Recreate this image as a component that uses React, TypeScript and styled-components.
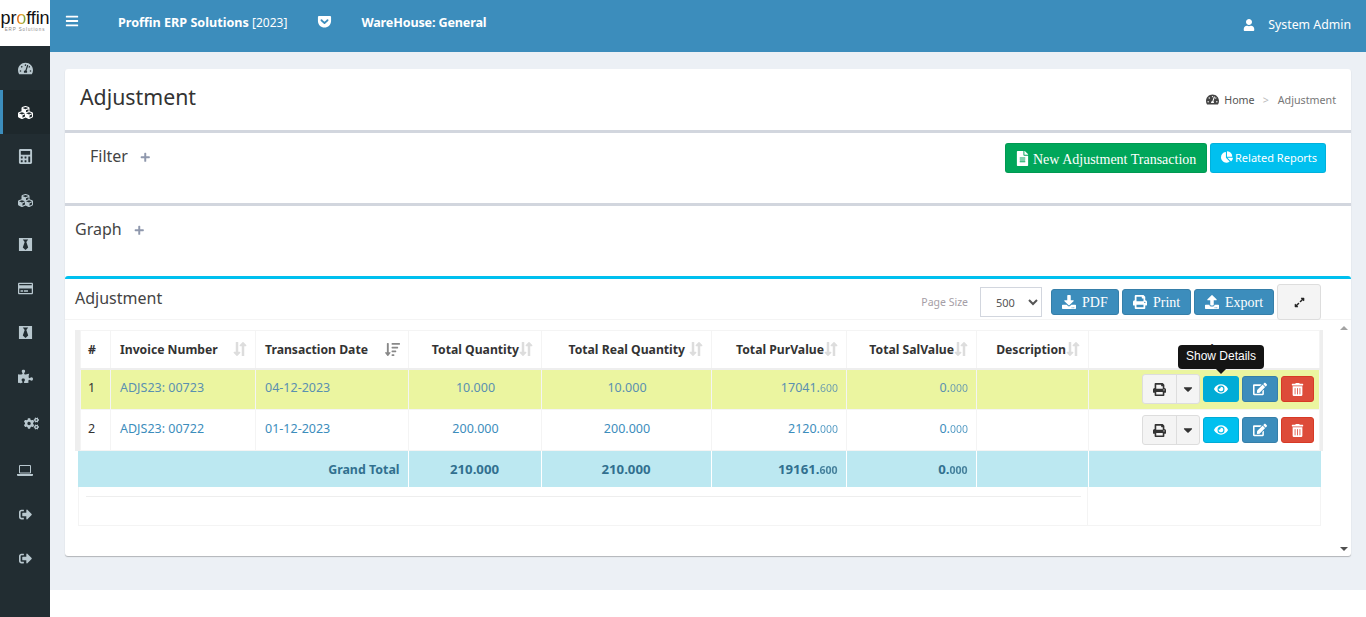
import React from 'react';
import styled, { createGlobalStyle } from 'styled-components';
import {
  FaBars, FaBlackTie, FaChartPie, FaCogs, FaCubes, FaDownload, FaEdit, FaEye, FaFileAlt, FaGetPocket,
  FaLongArrowAltDown, FaLongArrowAltUp, FaPlus, FaPrint, FaPuzzlePiece, FaRegCreditCard,
  FaSignOutAlt, FaSortAmountDown, FaTachometerAlt, FaTrashAlt, FaUpload, FaUser, FaCalculator,
  FaCaretDown, FaExpandAlt,
} from 'react-icons/fa';

const FONT = `'Noto Sans', 'Liberation Sans', sans-serif`;

const GlobalStyle = createGlobalStyle`
  html, body { margin: 0; padding: 0; background: #fff; }
  body { font-family: ${FONT}; font-size: 13px; color: #333; overflow: hidden; }
  * { box-sizing: border-box; }
`;

const Shell = styled.div`
  display: flex;
  width: 1366px;
  height: 617px;
  overflow: hidden;
`;

const Sidebar = styled.aside`
  width: 50px;
  flex: none;
  background: #222d32;
  display: flex;
  flex-direction: column;
`;

const Logo = styled.div`
  height: 46px;
  background: #fff;
  display: flex;
  flex-direction: column;
  align-items: center;
  overflow: hidden;
  padding-top: 9px;
  color: #111;
  font: 18px/18px 'Liberation Sans', sans-serif;
  letter-spacing: -0.1px;
`;

const LogoO = styled.span`
  background: linear-gradient(100deg, #d8392b 0%, #e8a21f 50%, #3aa655 100%);
  -webkit-background-clip: text;
  background-clip: text;
  color: transparent;
`;

const LogoSub = styled.div`
  font-size: 4.5px;
  line-height: 6px;
  letter-spacing: 0.9px;
  color: #888;
  white-space: nowrap;
`;

const NavItem = styled.div<{ $active?: boolean; $shift?: number; $h?: number; $size?: number }>`
  height: ${(p) => p.$h ?? 44}px;
  display: flex;
  align-items: center;
  justify-content: center;
  font-size: ${(p) => p.$size ?? 15}px;
  color: ${(p) => (p.$active ? '#fff' : '#b8c7ce')};
  background: ${(p) => (p.$active ? '#1e282c' : 'transparent')};
  border-left: 3px solid ${(p) => (p.$active ? '#3c8dbc' : 'transparent')};
  padding-left: ${(p) => p.$shift ?? 0}px;
  padding-right: 3px;
`;

const Main = styled.div`
  flex: 1;
  min-width: 0;
  display: flex;
  flex-direction: column;
`;

const TopBar = styled.header`
  height: 52px;
  flex: none;
  background: #3c8dbc;
  color: #fff;
  display: flex;
  align-items: flex-start;
  padding: 14px 15px 0 15px;
`;

const Burger = styled.span`
  font-size: 14px;
  width: 53px;
  display: flex;
`;

const BrandName = styled.span<{ $tight?: boolean }>`
  font-weight: 700;
  font-size: 12.6px;
  line-height: 17px;
  letter-spacing: ${(p) => (p.$tight ? -0.15 : 0)}px;
`;

const BrandYear = styled.span`
  font-weight: 400;
  font-size: 12px;
`;

const PocketIcon = styled.span`
  font-size: 15px;
  margin: 0 29px 0 30px;
  display: flex;
`;

const UserBox = styled.div`
  margin-left: auto;
  display: flex;
  align-items: center;
  gap: 13px;
  font-size: 12.3px;
  line-height: 20px;
  padding-top: 1px;
`;

const UserIcon = styled.span`
  display: flex;
  font-size: 12px;
`;

const Content = styled.div`
  height: 538px;
  flex: none;
  background: #ecf0f5;
  padding: 17px 15px 0;
`;

const Card = styled.section`
  height: 487px;
  background: #fff;
  border-radius: 3px;
  box-shadow: 0 1px 1px rgba(0, 0, 0, 0.25);
  display: flex;
  flex-direction: column;
`;

const TitleBar = styled.div`
  height: 64px;
  flex: none;
  border-bottom: 3px solid #d2d6de;
  display: flex;
  align-items: center;
  justify-content: space-between;
  padding: 0 15px;
`;

const PageTitle = styled.h1`
  margin: 0 0 6px;
  font-size: 21.3px;
  font-weight: 400;
  color: #333;
`;

const Crumbs = styled.div`
  display: flex;
  align-items: center;
  font-size: 10.7px;
  color: #777;
`;

const CrumbHome = styled.span`
  display: flex;
  align-items: center;
  gap: 5px;
  color: #555;
  svg {
    font-size: 13px;
    color: #444;
  }
`;

const CrumbSep = styled.span`
  color: #bbb;
  margin: 0 9px 0 8px;
`;

const FilterBar = styled.div`
  height: 73px;
  flex: none;
  border-bottom: 3px solid #d2d6de;
  display: flex;
  justify-content: space-between;
  padding: 10px 25px 0 25px;
`;

const GraphBar = styled.div`
  height: 70px;
  flex: none;
  padding: 10px 10px 0;
`;

const SectionName = styled.div`
  display: flex;
  align-items: center;
  gap: 12px;
  height: 26px;
  font-size: 16px;
  color: #444;
`;

const PlusIcon = styled.span`
  display: flex;
  font-size: 10.5px;
  color: #8f98ad;
  padding-top: 2px;
`;

const HeadActions = styled.div`
  display: flex;
  gap: 3px;
`;

const ActionButton = styled.button<{ $bg: string; $w: number; $serif?: boolean }>`
  width: ${(p) => p.$w}px;
  height: 30px;
  border: 1px solid rgba(0, 0, 0, 0.08);
  border-radius: 3px;
  background: ${(p) => p.$bg};
  color: #fff;
  display: flex;
  align-items: center;
  gap: 3px;
  padding: ${(p) => (p.$serif ? '3px 0 0 9px' : '0 0 2px 10px')};
  font-family: ${(p) => (p.$serif ? `'Liberation Serif', serif` : FONT)};
  font-size: ${(p) => (p.$serif ? 14 : 11)}px;
  white-space: nowrap;
  svg {
    font-size: ${(p) => (p.$serif ? 15 : 12)}px;
    margin-top: ${(p) => (p.$serif ? -3 : 0)}px;
    margin-right: ${(p) => (p.$serif ? 0 : -1)}px;
    flex: none;
  }
`;

const ListPanel = styled.div`
  flex: 1;
  min-height: 0;
  border-top: 3px solid #00c0ef;
  border-radius: 3px 3px 0 0;
  display: flex;
  flex-direction: column;
`;

const ListHead = styled.div`
  height: 41px;
  flex: none;
  border-bottom: 1px solid #f4f4f4;
  display: flex;
  padding: 0 30px 0 10px;
`;

const ListTitle = styled.div`
  font-size: 16px;
  color: #444;
  padding-top: 8px;
`;

const ListTools = styled.div`
  margin-left: auto;
  display: flex;
  align-items: flex-start;
  padding-top: 5px;
`;

const PageSizeLabel = styled.span`
  font-size: 10.5px;
  color: #a59ea6;
  margin: 11px 12px 0 0;
`;

const PageSelect = styled.select`
  width: 62px;
  height: 30px;
  margin: 3px 9px 0 0;
  border: 1px solid #d2d6de;
  background: #fff;
  font: 11px ${FONT};
  color: #555;
  padding-left: 11px;
`;

const ExportButton = styled.button<{ $w: number }>`
  width: ${(p) => p.$w}px;
  height: 26px;
  margin: 5px 3px 0 0;
  border: 1px solid #367fa9;
  border-radius: 3px;
  background: #3c8dbc;
  color: #fff;
  display: flex;
  align-items: center;
  gap: 6px;
  padding: 2px 0 0 10px;
  font: 14px 'Liberation Serif', serif;
  svg {
    margin-top: -2px;
    flex: none;
  }
`;

const ExpandButton = styled.button`
  width: 44px;
  height: 36px;
  margin-left: 0;
  border: 1px solid #ddd;
  border-radius: 3px;
  background: #f4f4f4;
  color: #222;
  font-size: 11px;
  display: flex;
  align-items: center;
  justify-content: center;
`;

const ListBody = styled.div`
  flex: 1;
  min-height: 0;
  display: flex;
`;

const TableArea = styled.div`
  flex: 1;
  min-width: 0;
  padding: 10px 0 0 10px;
`;

const DataFrame = styled.div`
  width: 1248px;
  border-left: 5px solid #eee;
  border-right: 4px solid #eee;
`;

const Table = styled.table`
  width: 100%;
  table-layout: fixed;
  border-collapse: collapse;
  font-size: 12.5px;
`;

const TotalsTable = styled(Table)`
  width: 1243px;
  margin-left: -1px;
`;

const Th = styled.th<{ $align?: string }>`
  height: 38px;
  padding: 0 8px 0 9px;
  font-size: 12.2px;
  font-weight: 700;
  color: #333;
  white-space: nowrap;
  text-align: ${(p) => p.$align ?? 'left'};
  border: 1px solid #f4f4f4;
  border-bottom: 2px solid #eee;
`;

const NumTh = styled(Th)`
  padding-left: 7px;
`;

const ThInner = styled.span<{ $end?: boolean }>`
  display: flex;
  align-items: center;
  justify-content: ${(p) => (p.$end ? 'flex-end' : 'space-between')};
`;

const SortIcons = styled.span<{ $active?: boolean; $gap?: number }>`
  display: inline-flex;
  flex: none;
  font-size: ${(p) => (p.$active ? 15 : 16)}px;
  color: ${(p) => (p.$active ? '#888' : '#ddd')};
  margin-left: ${(p) => p.$gap ?? 0}px;
`;

const DownArrow = styled(FaLongArrowAltDown)`
  width: 0.5em;
`;

const UpArrow = styled(FaLongArrowAltUp)`
  width: 0.5em;
  margin-left: -2px;
`;

const Tr = styled.tr<{ $hl?: boolean }>`
  background: ${(p) => (p.$hl ? '#ebf5a0' : '#fff')};
`;

const Td = styled.td<{ $align?: string; $link?: boolean; $hl?: boolean }>`
  height: 41px;
  padding: 0 8px 3px 9px;
  border: 1px solid #f4f4f4;
  color: ${(p) => (p.$link ? (p.$hl ? '#5a90b0' : '#3c8dbc') : '#333')};
  text-align: ${(p) => p.$align ?? 'left'};
  white-space: nowrap;
`;

const NumTd = styled(Td)`
  padding-left: 7px;
`;

const ToolsTd = styled.td`
  height: 41px;
  padding: 0 5px 0 0;
  border: 1px solid #f4f4f4;
`;

const Decimal = styled.small`
  font-size: 10.5px;
  opacity: 0.85;
`;

const RowTools = styled.div`
  display: flex;
  align-items: center;
  justify-content: flex-end;
  gap: 3px;
`;

const SplitGroup = styled.div`
  display: flex;
  height: 30px;
  border: 1px solid #ddd;
  border-radius: 3px;
  background: #f4f4f4;
  color: #333;
`;

const SplitPart = styled.span<{ $w: number; $divider?: boolean; $size: number }>`
  width: ${(p) => p.$w}px;
  display: flex;
  align-items: center;
  justify-content: center;
  font-size: ${(p) => p.$size}px;
  border-left: ${(p) => (p.$divider ? '1px solid #ddd' : 'none')};
`;

const ToolButton = styled.button<{ $bg: string; $line: string; $w?: number; $size?: number }>`
  width: ${(p) => p.$w ?? 36}px;
  height: 26px;
  padding: 0;
  border: 1px solid ${(p) => p.$line};
  border-radius: 3px;
  background: ${(p) => p.$bg};
  color: #fff;
  font-size: ${(p) => p.$size ?? 14}px;
  display: flex;
  align-items: center;
  justify-content: center;
`;

const ToolsHead = styled.div`
  text-align: center;
  position: relative;
`;

const Tooltip = styled.div`
  position: absolute;
  left: 80px;
  top: 4px;
  width: 86px;
  height: 24px;
  background: #141414;
  color: #fff;
  border-radius: 4px;
  font: 400 12px/22px 'Liberation Sans', sans-serif;
  text-align: center;
  &::after {
    content: '';
    position: absolute;
    left: 38px;
    bottom: -5px;
    border: 5px solid transparent;
    border-bottom: 0;
    border-top-color: #141414;
  }
`;

const TotalsWrap = styled.div`
  width: 1243px;
  margin-left: 3px;
  height: 75px;
  border: 1px solid #f4f4f4;
  border-top: none;
`;

const TotalTd = styled.td<{ $align?: string; $num?: boolean }>`
  height: 36px;
  padding: ${(p) => (p.$num ? '0 8px' : '1px 8px 0')};
  background: #bce8f1;
  color: #31708f;
  font-weight: 700;
  font-size: ${(p) => (p.$num ? 13.2 : 12.4)}px;
  border-right: 1px solid #fff;
  text-align: ${(p) => p.$align ?? 'left'};
  &:last-child {
    border-right: none;
  }
`;

const FootRow = styled.div`
  width: 1009px;
  height: 38px;
  border-right: 1px solid #f4f4f4;
  padding-top: 9px;
`;

const Rule = styled.div`
  width: 995px;
  margin-left: 7px;
  border-top: 1px solid #eee;
`;

const ScrollRail = styled.div`
  width: 15px;
  flex: none;
  display: flex;
  flex-direction: column;
  justify-content: space-between;
  align-items: center;
  padding: 6px 0 5px;
`;

const ScrollArrow = styled.span<{ $down?: boolean }>`
  border: 4px solid transparent;
  ${(p) => (p.$down ? 'border-bottom: 0; border-top-color: #505050;' : 'border-top: 0; border-bottom-color: #a3a3a3;')}
`;

const Trail = styled.div`
  flex: 1;
  background: #fff;
`;

// the font-awesome 5 laptop is filled, the one in the picture is a thin frame
const LaptopIcon = () => (
  <svg width="16" height="11" viewBox="0 0 16 11" fill="currentColor">
    <path d="M2.5.5h11v7.5h-11z" fill="none" stroke="currentColor" />
    <path d="M0 9h16v1a1 1 0 0 1-1 1H1a1 1 0 0 1-1-1z" />
  </svg>
);

const NAV = [
  { icon: <FaTachometerAlt /> },
  { icon: <FaCubes />, active: true },
  { icon: <FaCalculator /> },
  { icon: <FaCubes /> },
  { icon: <FaBlackTie /> },
  { icon: <FaRegCreditCard /> },
  { icon: <FaBlackTie /> },
  { icon: <FaPuzzlePiece /> },
  { icon: <FaCogs />, shift: 12, h: 50 },
  { icon: <LaptopIcon /> },
  { icon: <FaSignOutAlt />, size: 13 },
  { icon: <FaSignOutAlt />, size: 13 },
];

const WIDTHS = [30, 145, 153, 133, 170, 135, 130, 112, 231];

const COLUMNS = [
  { name: 'Invoice Number', align: 'left' },
  { name: 'Transaction Date', align: 'left', active: true },
  { name: 'Total Quantity', align: 'right', end: true },
  { name: 'Total Real Quantity', align: 'right', end: true, gap: 4 },
  { name: 'Total PurValue', align: 'right', end: true },
  { name: 'Total SalValue', align: 'right', end: true },
  { name: 'Description', align: 'right', end: true },
];

const ROWS = [
  { no: 1, inv: 'ADJS23: 00723', date: '04-12-2023', qty: '10.000', real: '10.000', pur: ['17041', '600'], hl: true },
  { no: 2, inv: 'ADJS23: 00722', date: '01-12-2023', qty: '200.000', real: '200.000', pur: ['2120', '000'], hl: false },
];

const Money = ({ v }: { v: string[] }) => (
  <>
    {v[0]}.<Decimal>{v[1]}</Decimal>
  </>
);

const Cols = ({ widths }: { widths: number[] }) => (
  <colgroup>
    {widths.map((w, i) => (
      <col key={i} width={w} />
    ))}
  </colgroup>
);

export default function App() {
  return (
    <Shell>
      <GlobalStyle />
      <Sidebar>
        <Logo>
          <div>
            pr<LogoO>o</LogoO>ffin
          </div>
          <LogoSub>ERP Solutions</LogoSub>
        </Logo>
        {NAV.map((n, i) => (
          <NavItem key={i} $active={n.active} $shift={n.shift} $h={n.h} $size={n.size}>
            {n.icon}
          </NavItem>
        ))}
      </Sidebar>
      <Main>
        <TopBar>
          <Burger>
            <FaBars />
          </Burger>
          <BrandName>
            Proffin ERP Solutions <BrandYear>[2023]</BrandYear>
          </BrandName>
          <PocketIcon>
            <FaGetPocket />
          </PocketIcon>
          <BrandName $tight>WareHouse: General</BrandName>
          <UserBox>
            <UserIcon>
              <FaUser />
            </UserIcon>
            System Admin
          </UserBox>
        </TopBar>
        <Content>
          <Card>
            <TitleBar>
              <PageTitle>Adjustment</PageTitle>
              <Crumbs>
                <CrumbHome>
                  <FaTachometerAlt /> Home
                </CrumbHome>
                <CrumbSep>&gt;</CrumbSep>
                Adjustment
              </Crumbs>
            </TitleBar>
            <FilterBar>
              <SectionName>
                Filter
                <PlusIcon>
                  <FaPlus />
                </PlusIcon>
              </SectionName>
              <HeadActions>
                <ActionButton $bg="#00a65a" $w={202} $serif>
                  <FaFileAlt /> New Adjustment Transaction
                </ActionButton>
                <ActionButton $bg="#00c0ef" $w={116}>
                  <FaChartPie /> Related Reports
                </ActionButton>
              </HeadActions>
            </FilterBar>
            <GraphBar>
              <SectionName>
                Graph
                <PlusIcon>
                  <FaPlus />
                </PlusIcon>
              </SectionName>
            </GraphBar>
            <ListPanel>
              <ListHead>
                <ListTitle>Adjustment</ListTitle>
                <ListTools>
                  <PageSizeLabel>Page Size</PageSizeLabel>
                  <PageSelect defaultValue="500">
                    <option>500</option>
                  </PageSelect>
                  <ExportButton $w={68}>
                    <FaDownload /> PDF
                  </ExportButton>
                  <ExportButton $w={69}>
                    <FaPrint /> Print
                  </ExportButton>
                  <ExportButton $w={80}>
                    <FaUpload /> Export
                  </ExportButton>
                  <ExpandButton>
                    <FaExpandAlt />
                  </ExpandButton>
                </ListTools>
              </ListHead>
              <ListBody>
                <TableArea>
                  <DataFrame>
                    <Table>
                      <Cols widths={WIDTHS} />
                      <thead>
                        <tr>
                          <NumTh>#</NumTh>
                          {COLUMNS.map((c) => (
                            <Th key={c.name} $align={c.align}>
                              <ThInner $end={c.end}>
                                {c.name}
                                <SortIcons $active={c.active} $gap={c.gap}>
                                  {c.active ? (
                                    <FaSortAmountDown />
                                  ) : (
                                    <>
                                      <DownArrow />
                                      <UpArrow />
                                    </>
                                  )}
                                </SortIcons>
                              </ThInner>
                            </Th>
                          ))}
                          <Th $align="center">
                            <ToolsHead>
                              Tools
                              <Tooltip>Show Details</Tooltip>
                            </ToolsHead>
                          </Th>
                        </tr>
                      </thead>
                      <tbody>
                        {ROWS.map((r) => (
                          <Tr key={r.no} $hl={r.hl}>
                            <NumTd>{r.no}</NumTd>
                            <Td $link $hl={r.hl}>{r.inv}</Td>
                            <Td $link $hl={r.hl}>{r.date}</Td>
                            <Td $link $hl={r.hl} $align="center">{r.qty}</Td>
                            <Td $link $hl={r.hl} $align="center">{r.real}</Td>
                            <Td $link $hl={r.hl} $align="right">
                              <Money v={r.pur} />
                            </Td>
                            <Td $link $hl={r.hl} $align="right">
                              <Money v={['0', '000']} />
                            </Td>
                            <Td />
                            <ToolsTd>
                              <RowTools>
                                <SplitGroup>
                                  <SplitPart $w={33} $size={13}>
                                    <FaPrint />
                                  </SplitPart>
                                  <SplitPart $w={23} $size={14} $divider>
                                    <FaCaretDown />
                                  </SplitPart>
                                </SplitGroup>
                                <ToolButton $bg={r.hl ? '#00acd6' : '#00c0ef'} $line="#00acd6">
                                  <FaEye />
                                </ToolButton>
                                <ToolButton $bg="#3c8dbc" $line="#367fa9">
                                  <FaEdit />
                                </ToolButton>
                                <ToolButton $bg="#dd4b39" $line="#d73925" $w={33} $size={13}>
                                  <FaTrashAlt />
                                </ToolButton>
                              </RowTools>
                            </ToolsTd>
                          </Tr>
                        ))}
                      </tbody>
                    </Table>
                  </DataFrame>
                  <TotalsWrap>
                    <TotalsTable>
                      <Cols widths={[330, 133, 170, 135, 130, 112, 233]} />
                      <tbody>
                        <tr>
                          <TotalTd $align="right">Grand Total</TotalTd>
                          <TotalTd $align="center" $num>210.000</TotalTd>
                          <TotalTd $align="center" $num>210.000</TotalTd>
                          <TotalTd $align="right" $num>
                            <Money v={['19161', '600']} />
                          </TotalTd>
                          <TotalTd $align="right" $num>
                            <Money v={['0', '000']} />
                          </TotalTd>
                          <TotalTd />
                          <TotalTd />
                        </tr>
                      </tbody>
                    </TotalsTable>
                    <FootRow>
                      <Rule />
                    </FootRow>
                  </TotalsWrap>
                </TableArea>
                <ScrollRail>
                  <ScrollArrow />
                  <ScrollArrow $down />
                </ScrollRail>
              </ListBody>
            </ListPanel>
          </Card>
        </Content>
        <Trail />
      </Main>
    </Shell>
  );
}
